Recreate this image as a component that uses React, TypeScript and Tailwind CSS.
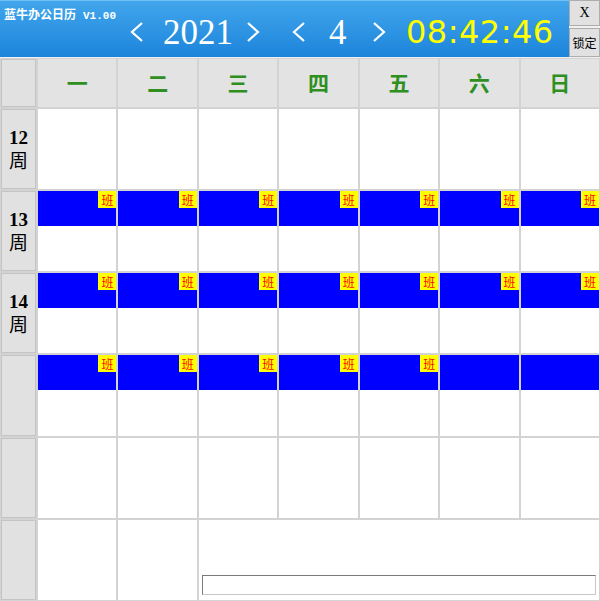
import React from "react";

const days = ["一", "二", "三", "四", "五", "六", "日"];

type Row = { label?: string; band?: boolean; badges?: number };

const rows: Row[] = [
  { label: "12" },
  { label: "13", band: true, badges: 7 },
  { label: "14", band: true, badges: 7 },
  { band: true, badges: 5 },
  {},
];

function Chevron({ dir }: { dir: "left" | "right" }) {
  return (
    <svg width="16" height="22" viewBox="0 0 16 22" className="shrink-0">
      <polyline
        points={dir === "left" ? "13,2 3,11 13,20" : "3,2 13,11 3,20"}
        fill="none"
        stroke="white"
        strokeWidth="2.2"
      />
    </svg>
  );
}

function Cell({ band, badge }: { band?: boolean; badge?: boolean }) {
  return (
    <div className="bg-white flex flex-col">
      {band && (
        <div className="h-[35px] bg-[#0000ff] flex justify-end items-start">
          {badge && (
            <div className="w-[18px] h-[17px] bg-[#ffff00] text-[#ff0000] text-[12px] leading-[17px] text-center font-['Noto_Sans_CJK_SC',sans-serif]">
              班
            </div>
          )}
        </div>
      )}
    </div>
  );
}

function WeekCell({ label }: { label?: string }) {
  return (
    <div className="bg-[#e1e1e1] border border-[#c4c4c4] flex flex-col items-center justify-center font-['Liberation_Serif','Noto_Serif_CJK_SC','Noto_Sans_CJK_SC',serif] font-bold text-[19px] leading-[22px] text-black">
      {label && (
        <>
          <span>{label}</span>
          <span className="font-['Noto_Sans_CJK_SC',sans-serif] font-normal">周</span>
        </>
      )}
    </div>
  );
}

export default function App() {
  return (
    <div className="w-[600px] h-[601px] bg-[#f0f0f0] flex flex-col overflow-hidden">
      <div className="h-[57px] flex bg-gradient-to-b from-[#41a6ec] to-[#1b84db] border-t border-[#6fc0f5]">
        <div className="flex-1 relative flex items-center">
          <div className="absolute left-[4px] top-[4px] flex items-baseline gap-[7px] text-white">
            <span className="text-[12px] font-bold font-['Noto_Sans_CJK_SC',sans-serif]">蓝牛办公日历</span>
            <span className="text-[11px] font-bold font-['Liberation_Mono',monospace]">V1.00</span>
          </div>
          <div className="flex items-center ml-[129px] mt-[6px]">
            <Chevron dir="left" />
            <span className="ml-[18px] w-[70px] text-white text-[35px] leading-none font-['Liberation_Serif',serif]">
              2021
            </span>
            <span className="ml-[12px]">
              <Chevron dir="right" />
            </span>
            <span className="ml-[30px]">
              <Chevron dir="left" />
            </span>
            <span className="ml-[22px] w-[18px] text-white text-[35px] leading-none font-['Liberation_Serif',serif]">
              4
            </span>
            <span className="ml-[24px]">
              <Chevron dir="right" />
            </span>
            <span className="ml-[19px] text-[#ffff00] text-[32px] leading-none font-['DejaVu_Sans',sans-serif] tracking-[0.5px]">
              08:42:46
            </span>
          </div>
        </div>
        <div className="w-[31px] flex flex-col gap-[2px] bg-[#f0f0f0] -mt-px">
          <button className="h-[26px] bg-[#e1e1e1] border border-[#adadad] text-[14px] font-['Liberation_Serif',serif] text-black leading-none">
            X
          </button>
          <button className="flex-1 bg-[#e1e1e1] border border-[#adadad] text-[12px] font-['Noto_Sans_CJK_SC',sans-serif] text-black leading-none">
            锁定
          </button>
        </div>
      </div>

      <div className="flex-1 mt-[1px] grid grid-cols-[35px_repeat(7,1fr)] grid-rows-[48px_repeat(6,1fr)] gap-[2px] bg-[#d3d3d3] p-px">
        <WeekCell />
        {days.map((d) => (
          <div
            key={d}
            className="bg-[#e3e3e3] flex items-center justify-center text-[21px] font-bold text-[#2f8f1f] font-['Noto_Sans_CJK_SC',sans-serif]"
          >
            {d}
          </div>
        ))}

        {rows.map((r, i) => (
          <React.Fragment key={i}>
            <WeekCell label={r.label} />
            {days.map((d, j) => (
              <Cell key={d} band={r.band} badge={!!r.badges && j < r.badges} />
            ))}
          </React.Fragment>
        ))}

        <WeekCell />
        <Cell />
        <Cell />
        <div className="col-span-5 bg-white flex items-end px-[3px] pb-[5px]">
          <input className="w-full h-[20px] border border-[#7a7a7a] border-b-[#c8c8c8] border-r-[#c8c8c8] bg-white outline-none" />
        </div>
      </div>
    </div>
  );
}
